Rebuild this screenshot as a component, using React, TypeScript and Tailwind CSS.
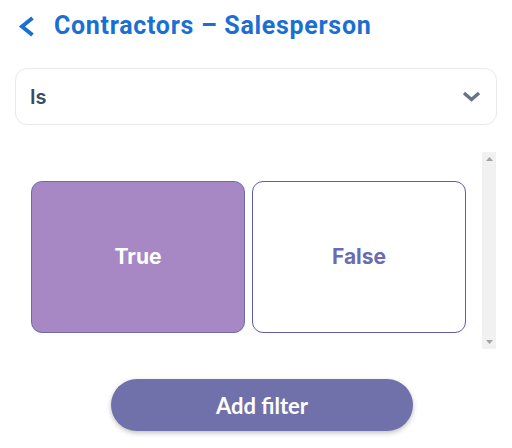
export default function App() {
  return (
    <div className="w-[512px] h-[448px] bg-white overflow-hidden font-['Inter',sans-serif]">
      {/* Header */}
      <div className="flex items-center h-[50px] pl-[18px] pt-[2px]">
        <svg width="17" height="21" viewBox="0 0 17 21" className="text-[#1b6fd3]">
          <polyline points="14.5,2 4,10.5 14.5,19" fill="none" stroke="currentColor" strokeWidth="4" strokeLinejoin="miter" />
        </svg>
        <h1 className="ml-[19px] text-[25px] font-bold text-[#1b6fd3] font-['Roboto',sans-serif] tracking-[0.7px]">
          Contractors – Salesperson
        </h1>
      </div>

      {/* Operator select */}
      <div className="px-[15px] mt-[18px]">
        <div className="flex items-center justify-between h-[57px] border border-[#e8e8ec] rounded-[12px] pl-[14px] pr-[15px]">
          <span className="text-[20px] font-semibold text-[#3a4a60]">Is</span>
          <svg width="19" height="11" viewBox="0 0 19 11" className="text-[#6a7287]">
            <polyline points="2,2 9.5,8.5 17,2" fill="none" stroke="currentColor" strokeWidth="3.4" />
          </svg>
        </div>
      </div>

      {/* Value options */}
      <div className="flex mt-[27px] mx-[15px] h-[197px] w-[481px]">
        <div className="flex-1 grid grid-cols-2 gap-[7px] px-[16px] pt-[29px] content-start">
          <button className="h-[152px] rounded-[11px] bg-[#a788c4] border border-[#6b6bb0] text-white text-[21px] font-bold">
            True
          </button>
          <button className="h-[152px] rounded-[11px] bg-white border-[1.5px] border-[#5c5cb0] text-[#6b6bb3] text-[21px] font-bold">
            False
          </button>
        </div>
        {/* scrollbar */}
        <div className="w-[14px] bg-[#f1f1f1] flex flex-col items-center justify-between py-[5px]">
          <svg width="7" height="4" viewBox="0 0 7 4"><polygon points="0,4 3.5,0 7,4" fill="#a3a3a3" /></svg>
          <svg width="7" height="4" viewBox="0 0 7 4"><polygon points="0,0 3.5,4 7,0" fill="#a3a3a3" /></svg>
        </div>
      </div>

      {/* Action */}
      <div className="flex justify-center mt-[30px] pl-[12px]">
        <button className="w-[302px] h-[52px] rounded-full bg-[#7070aa] text-white text-[22px] font-bold font-['Lato',sans-serif] shadow-[0_2px_5px_rgba(0,0,0,0.25)]">
          Add filter
        </button>
      </div>
    </div>
  );
}
